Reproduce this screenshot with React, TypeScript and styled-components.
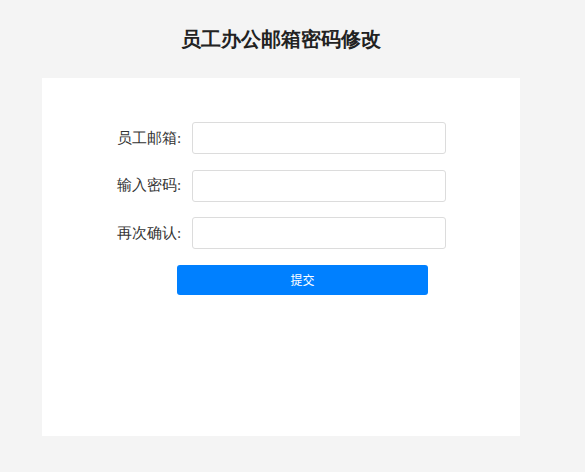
import React, { useState } from "react";
import styled, { createGlobalStyle } from "styled-components";

const GlobalStyle = createGlobalStyle`
  html, body {
    margin: 0;
    padding: 0;
    background-color: #f4f4f4;
  }
  body {
    font-family: serif;
  }
`;

const Page = styled.div`
  width: 478px;
  margin-left: 42px;
  padding-top: 24px;
`;
const Title = styled.h1`
  margin: 0;
  height: 30px;
  line-height: 30px;
  text-align: center;
  font-size: 20px;
  font-weight: 700;
  color: #222;
  font-family: serif;
`;
const Card = styled.div`
  margin-top: 24px;
  height: 358px;
  background-color: #fff;
  box-sizing: border-box;
  padding: 44px 0 0 75px;
`;
const Row = styled.div`
  display: flex;
  align-items: center;
  height: 32px;
  margin-bottom: 15.5px;
`;
const Label = styled.label`
  width: 75px;
  font-size: 15px;
  color: #333;
  font-family: serif;
  white-space: nowrap;
`;
const Input = styled.input`
  width: 254px;
  height: 32px;
  box-sizing: border-box;
  border: 1px solid #dcdcdc;
  border-radius: 3px;
  padding: 0 8px;
  font-size: 14px;
  &:focus {
    outline: none;
    border-color: #0080ff;
  }
`;
const SubmitBox = styled.div`
  padding-left: 60px;
`;
const Submit = styled.button`
  width: 251px;
  height: 30px;
  border: none;
  border-radius: 3px;
  background-color: #0080ff;
  color: #fff;
  font-size: 12px;
  font-family: "Noto Sans CJK SC", sans-serif;
  cursor: pointer;
`;

const fields = [
  { key: "email", label: "员工邮箱:", type: "text" },
  { key: "password", label: "输入密码:", type: "password" },
  { key: "confirm", label: "再次确认:", type: "password" }
];

const App = () => {
  const [values, setValues] = useState<{ [key: string]: string }>({});
  return (
    <>
      <GlobalStyle />
      <Page>
        <Title>员工办公邮箱密码修改</Title>
        <Card>
          {fields.map(f => (
            <Row key={f.key}>
              <Label>{f.label}</Label>
              <Input
                type={f.type}
                value={values[f.key] || ""}
                onChange={e => setValues({ ...values, [f.key]: e.target.value })}
              />
            </Row>
          ))}
          <SubmitBox>
            <Submit type="button">提交</Submit>
          </SubmitBox>
        </Card>
      </Page>
    </>
  );
};

export default App;
